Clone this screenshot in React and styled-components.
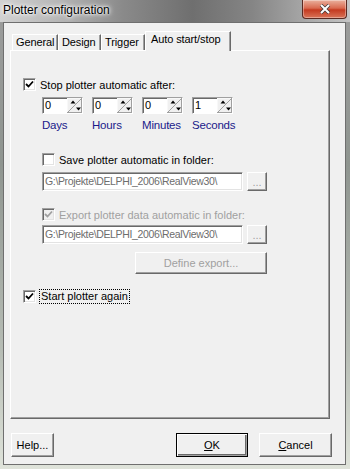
import React from 'react';
import styled, { createGlobalStyle, css } from 'styled-components';

const GlobalStyle = createGlobalStyle`
  html, body {
    margin: 0;
    padding: 0;
    width: 350px;
    height: 469px;
    overflow: hidden;
    font-family: 'Liberation Sans', Arial, sans-serif;
  }
`;

const Frame = styled.div`
  width: 350px;
  height: 469px;
  box-sizing: border-box;
  padding: 0 4px 4px 3px;
  display: flex;
  flex-direction: column;
  background: linear-gradient(180deg, #9c9c9c 0%, #8f9590 35%, #b7bdb5 75%, #dfe3da 100%);
`;

const TitleBar = styled.div`
  height: 22px;
  margin: 0 -4px 0 -3px;
  padding: 0 3px 0 3px;
  display: flex;
  align-items: flex-start;
  background: linear-gradient(90deg, #d2d2d2 0%, #b4b4b4 18%, #8a8a8a 35%, #6f6f6f 55%, #858585 72%, #a9a9a9 88%, #c4c4c4 100%);
`;

const Title = styled.div`
  font-size: 12px;
  line-height: 21px;
  color: #000;
  text-shadow: 0 0 6px #fff, 0 0 4px #fff, 0 0 2px #fff;
`;

const CloseButton = styled.div`
  margin-left: auto;
  width: 45px;
  height: 19px;
  box-sizing: border-box;
  border: 1px solid #5a2a22;
  border-top: none;
  border-radius: 0 0 4px 4px;
  background: linear-gradient(180deg, #eab19e 0%, #d96a50 45%, #c43a20 55%, #d97458 100%);
  display: flex;
  align-items: center;
  justify-content: center;
  box-shadow: inset 0 0 0 1px rgba(255, 255, 255, 0.35);
`;

const Client = styled.div`
  flex: 1;
  background: #f0f0f0;
  border: 1px solid #6f6f6f;
  display: flex;
  flex-direction: column;
  padding-top: 8px;
`;

const TabControl = styled.div`
  margin-left: 6px;
  width: 320px;
  display: flex;
  flex-direction: column;
`;

const TabRow = styled.div`
  height: 19px;
  display: flex;
  align-items: flex-end;
  padding-left: 2px;
`;

const Tab = styled.div`
  width: ${({ w }) => w}px;
  height: 16px;
  box-sizing: border-box;
  border-top: 1px solid #fff;
  border-left: 1px solid #fff;
  border-right: 1px solid #696969;
  box-shadow: inset -1px 0 #a0a0a0;
  font-size: 11px;
  line-height: 15px;
  padding-left: 3px;
  letter-spacing: -0.1px;
  color: #000;
  ${({ active }) =>
    active &&
    css`
      height: 20px;
      margin-bottom: -1px;
      background: #f0f0f0;
      padding-left: 5px;
      position: relative;
      z-index: 1;
    `}
`;

const Page = styled.div`
  height: 369px;
  box-sizing: border-box;
  border-top: 1px solid #fff;
  border-left: 1px solid #fff;
  border-right: 1px solid #696969;
  border-bottom: 1px solid #696969;
  box-shadow: inset -1px -1px #a0a0a0;
  padding: 27px 0 0 12px;
  display: flex;
  flex-direction: column;
`;

const CheckRow = styled.label`
  display: flex;
  align-items: center;
  height: 13px;
  gap: 4px;
  margin-top: ${({ mt }) => mt || 0}px;
  margin-left: ${({ ml }) => ml || 0}px;
  font-size: 11px;
  color: ${({ disabled }) => (disabled ? '#a0a0a0' : '#000')};
`;

const Box = styled.span`
  width: 13px;
  height: 13px;
  box-sizing: border-box;
  border-top: 1px solid #a0a0a0;
  border-left: 1px solid #a0a0a0;
  border-right: 1px solid #fff;
  border-bottom: 1px solid #fff;
  box-shadow: inset 1px 1px #696969, inset -1px -1px #e3e3e3;
  background: ${({ disabled }) => (disabled ? '#f0f0f0' : '#fff')};
  display: flex;
  align-items: center;
  justify-content: center;
  flex-shrink: 0;
`;

const FocusText = styled.span`
  outline: 1px dotted #000;
  padding: 0 1px;
  line-height: 13px;
`;

const SpinRow = styled.div`
  display: flex;
  gap: 9px;
  margin: 6px 0 0 19px;
`;

const SpinGroup = styled.div`
  width: 41px;
  display: flex;
  flex-direction: column;
`;

const SpinBox = styled.div`
  height: 17px;
  box-sizing: border-box;
  border-top: 1px solid #a0a0a0;
  border-left: 1px solid #a0a0a0;
  border-right: 1px solid #fff;
  border-bottom: 1px solid #fff;
  box-shadow: inset 1px 1px #696969;
  background: #fff;
  display: flex;
  align-items: stretch;
`;

const SpinValue = styled.span`
  flex: 1;
  font-size: 11px;
  line-height: 15px;
  padding-left: 2px;
  color: #000;
`;

const SpinLabel = styled.span`
  margin-top: 4px;
  font-size: 11.5px;
  line-height: 14px;
  letter-spacing: -0.2px;
  color: #1a1a8a;
`;

const EditRow = styled.div`
  display: flex;
  gap: 4px;
  margin: ${({ mt }) => mt}px 0 0 19px;
`;

const Edit = styled.div`
  width: 201px;
  height: 19px;
  box-sizing: border-box;
  border-top: 1px solid #a0a0a0;
  border-left: 1px solid #a0a0a0;
  border-right: 1px solid #fff;
  border-bottom: 1px solid #fff;
  box-shadow: inset 1px 1px #696969, inset -1px -1px #e3e3e3;
  background: #fff;
  font-size: 10.5px;
  letter-spacing: -0.35px;
  line-height: 17px;
  padding-left: 2px;
  color: #6d6d6d;
  white-space: nowrap;
  overflow: hidden;
`;

const Button = styled.div`
  width: ${({ w }) => w}px;
  height: ${({ h }) => h || 24}px;
  box-sizing: border-box;
  border-top: 1px solid #fff;
  border-left: 1px solid #fff;
  border-right: 1px solid #696969;
  border-bottom: 1px solid #696969;
  box-shadow: inset -1px -1px #a0a0a0;
  background: #f0f0f0;
  font-size: 11px;
  display: flex;
  align-items: center;
  justify-content: center;
  color: ${({ disabled }) => (disabled ? '#a0a0a0' : '#000')};
  ${({ primary }) =>
    primary &&
    css`
      outline: 1px solid #000;
      outline-offset: -1px;
      border-top-color: #000;
      border-left-color: #000;
      box-shadow: inset 1px 1px #fff, inset -1px -1px #a0a0a0, inset -2px -2px #696969;
    `}
`;

const ExportButtonRow = styled.div`
  display: flex;
  justify-content: flex-end;
  width: 225px;
  margin: 8px 0 0 19px;
`;

const Footer = styled.div`
  display: flex;
  align-items: center;
  gap: 11px;
  margin-top: 14px;
  padding: 0 13px 0 7px;
`;

const Spacer = styled.div`
  flex: 1;
`;

const Check = ({ color = '#000' }) => (
  <svg width="9" height="9" viewBox="0 0 9 9">
    <path d="M1 4 L3.5 6.5 L8 1.5" stroke={color} strokeWidth="1.8" fill="none" />
  </svg>
);

const SpinArrows = () => (
  <svg width="15" height="15" viewBox="0 0 15 15">
    <rect x="0" y="0" width="15" height="15" fill="#f0f0f0" />
    <path d="M0 0 H14 M0 0 V14" stroke="#fff" />
    <path d="M0.5 14.5 L14.5 0.5" stroke="#a0a0a0" />
    <path d="M14.5 0 V15 M0 14.5 H15" stroke="#a0a0a0" />
    <path d="M6 2.5 L8.5 5.5 H3.5 Z" fill="#000" />
    <path d="M9 9.5 H14 L11.5 12.5 Z" fill="#000" />
  </svg>
);

const Spin = ({ value, label }) => (
  <SpinGroup>
    <SpinBox>
      <SpinValue>{value}</SpinValue>
      <SpinArrows />
    </SpinBox>
    <SpinLabel>{label}</SpinLabel>
  </SpinGroup>
);

const tabs = [
  { name: 'General', w: 46 },
  { name: 'Design', w: 43 },
  { name: 'Trigger', w: 44 },
  { name: 'Auto start/stop', w: 86, active: true },
];

const App = () => (
  <>
    <GlobalStyle />
    <Frame>
      <TitleBar>
        <Title>Plotter configuration</Title>
        <CloseButton>
          <svg width="12" height="10" viewBox="0 0 12 10">
            <path d="M2 1 L10 9 M10 1 L2 9" stroke="#3a3a3a" strokeWidth="3.4" />
            <path d="M2 1 L10 9 M10 1 L2 9" stroke="#fff" strokeWidth="2" />
          </svg>
        </CloseButton>
      </TitleBar>
      <Client>
        <TabControl>
          <TabRow>
            {tabs.map((t) => (
              <Tab key={t.name} w={t.w} active={t.active}>
                {t.name}
              </Tab>
            ))}
          </TabRow>
          <Page>
            <CheckRow>
              <Box>
                <Check />
              </Box>
              Stop plotter automatic after:
            </CheckRow>
            <SpinRow>
              <Spin value="0" label="Days" />
              <Spin value="0" label="Hours" />
              <Spin value="0" label="Minutes" />
              <Spin value="1" label="Seconds" />
            </SpinRow>
            <CheckRow mt={21} ml={19}>
              <Box />
              Save plotter automatic in folder:
            </CheckRow>
            <EditRow mt={6}>
              <Edit>G:\Projekte\DELPHI_2006\RealView30\</Edit>
              <Button w={20} h={19} disabled>
                ...
              </Button>
            </EditRow>
            <CheckRow mt={17} ml={19} disabled>
              <Box disabled>
                <Check color="#a0a0a0" />
              </Box>
              Export plotter data automatic in folder:
            </CheckRow>
            <EditRow mt={4}>
              <Edit>G:\Projekte\DELPHI_2006\RealView30\</Edit>
              <Button w={20} h={19} disabled>
                ...
              </Button>
            </EditRow>
            <ExportButtonRow>
              <Button w={132} h={22} disabled>
                Define export...
              </Button>
            </ExportButtonRow>
            <CheckRow mt={16}>
              <Box>
                <Check />
              </Box>
              <FocusText>Start plotter again</FocusText>
            </CheckRow>
          </Page>
        </TabControl>
        <Footer>
          <Button w={43}>Help...</Button>
          <Spacer />
          <Button w={72} primary>
            <u>O</u>K
          </Button>
          <Button w={73}>
            <u>C</u>ancel
          </Button>
        </Footer>
      </Client>
    </Frame>
  </>
);

export default App;
